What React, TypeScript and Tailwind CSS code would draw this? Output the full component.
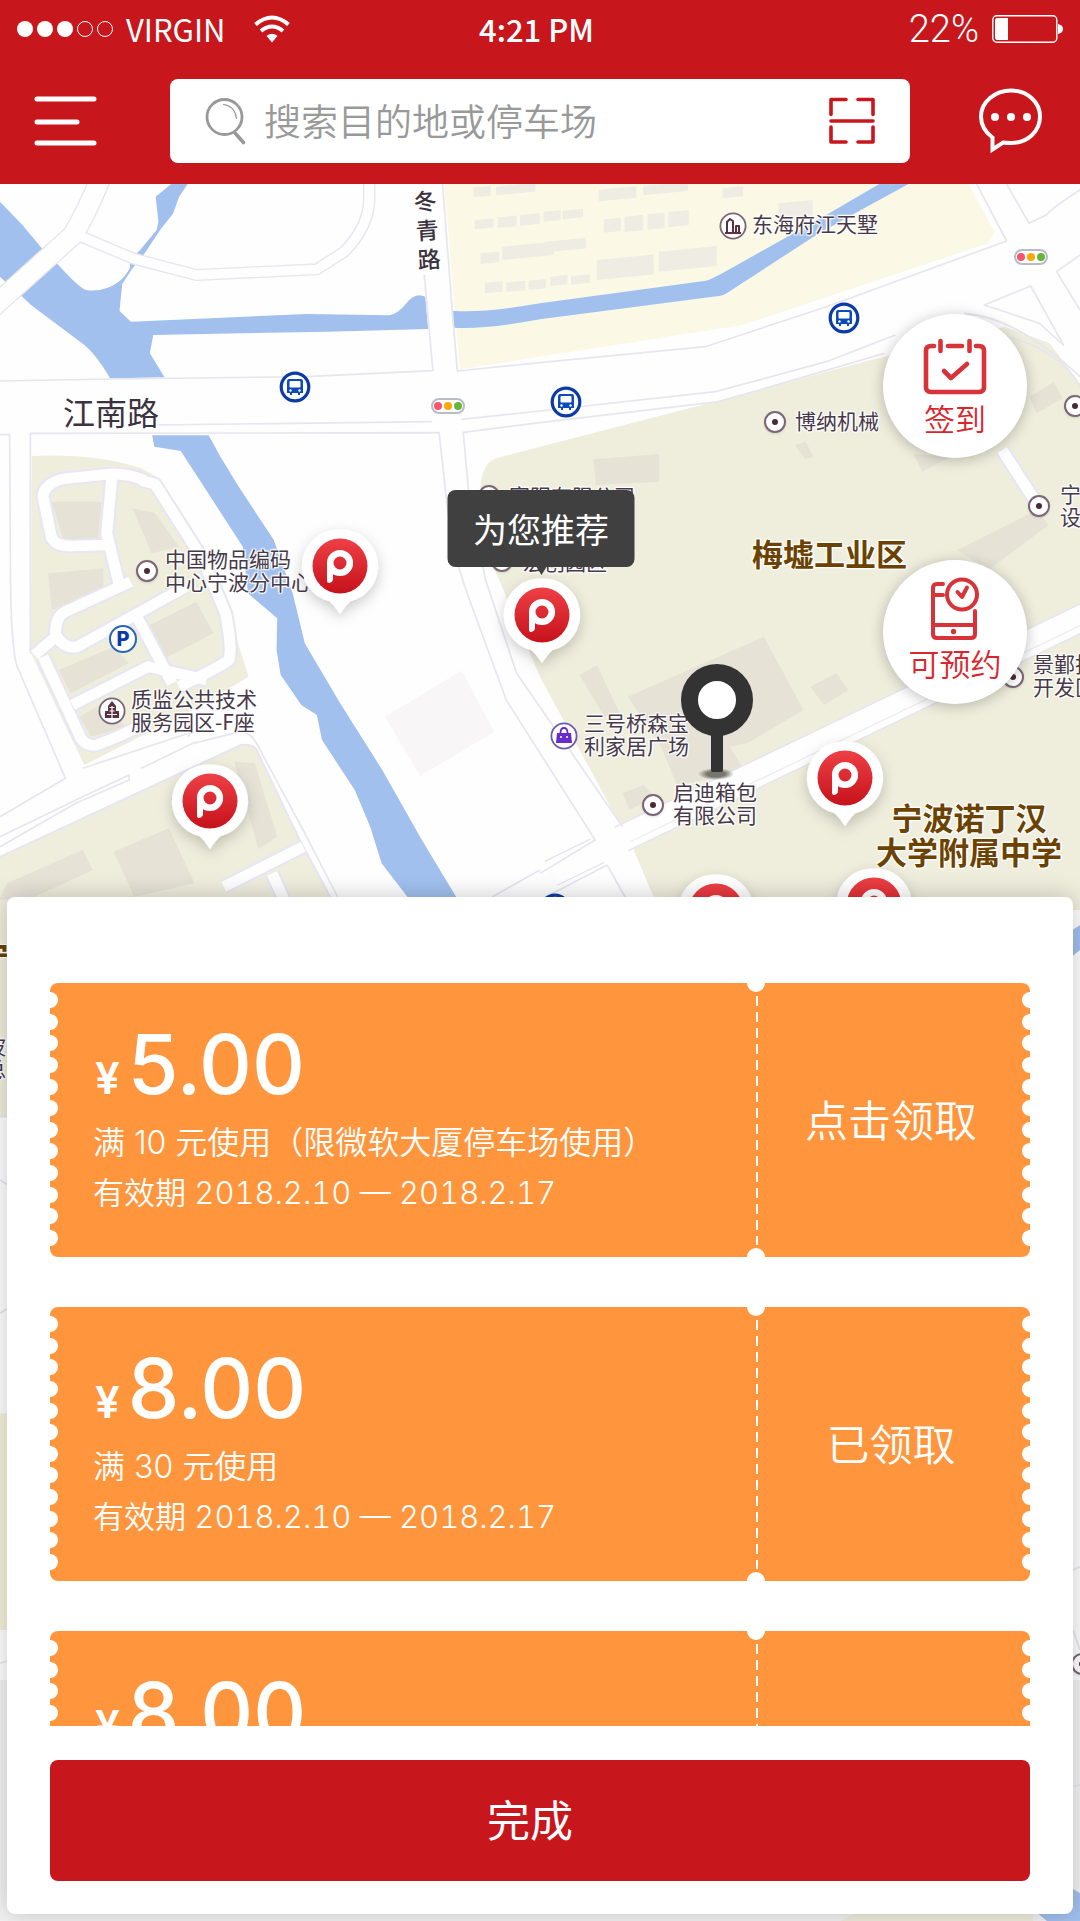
import React from 'react'

type Point = { x: number; y: number }

/* ---------- map data, in screen pixels measured from the map's top edge ---------- */

const parkingPins: Point[] = [
  { x: 340, y: 382 },
  { x: 542, y: 431 },
  { x: 210, y: 617 },
  { x: 845, y: 594 },
  { x: 716, y: 727 },
  { x: 874, y: 721 },
]

const poiDots: Point[] = [
  { x: 147, y: 387 },
  { x: 653, y: 621 },
  { x: 775, y: 238 },
  { x: 1039, y: 322 },
  { x: 1075, y: 222 },
  { x: 1013, y: 493 },
  { x: 489, y: 312 },
  { x: 502, y: 377 },
  { x: 1082, y: 1480 },
]

const busStops: Point[] = [
  { x: 295, y: 203 },
  { x: 844, y: 134 },
  { x: 566, y: 218 },
  { x: 555, y: 725 },
]

const trafficLights: Point[] = [
  { x: 448, y: 222 },
  { x: 1031, y: 73 },
]

const smallLabels: (Point & { lines: string[] })[] = [
  { x: 165, y: 363, lines: ['中国物品编码', '中心宁波分中心'] },
  { x: 131, y: 503, lines: ['质监公共技术', '服务园区-F座'] },
  { x: 752, y: 28, lines: ['东海府江天墅'] },
  { x: 795, y: 225, lines: ['博纳机械'] },
  { x: 584, y: 527, lines: ['三号桥森宝', '利家居广场'] },
  { x: 673, y: 596, lines: ['启迪箱包', '有限公司'] },
  { x: 1060, y: 298, lines: ['宁', '设'] },
  { x: 1033, y: 468, lines: ['景鄞投', '开发区'] },
  { x: 509, y: 300, lines: ['富阳有限公司'] },
  { x: 523, y: 366, lines: ['宏创园区'] },
]

const coupons = [
  { amount: '5.00', rule: '满 10 元使用（限微软大厦停车场使用）', dates: '有效期 2018.2.10 — 2018.2.17', action: '点击领取' },
  { amount: '8.00', rule: '满 30 元使用', dates: '有效期 2018.2.10 — 2018.2.17', action: '已领取' },
  { amount: '8.00', rule: '满 30 元使用', dates: '有效期 2018.2.10 — 2018.2.17', action: '已领取' },
]

const at = (p: Point) => ({ left: `${p.x / 10.8}%`, top: p.y })

/* ---------- map drawing ---------- */

const yellowBlocks = [
  [1375, 22, 50, 30], [1440, 20, 115, 26], [1378, 120, 55, 28], [1445, 112, 55, 32], [1510, 105, 58, 32],
  [1395, 220, 55, 32], [1458, 200, 150, 40], [1408, 308, 52, 32], [1470, 308, 55, 28], [1535, 302, 50, 28],
  [1738, 30, 110, 34], [1868, 18, 130, 28], [2098, 25, 60, 30], [2260, 70, 100, 50], [1578, 95, 50, 30],
  [1633, 92, 60, 26], [1753, 118, 50, 40], [1813, 110, 55, 46], [1880, 103, 50, 46], [1940, 96, 60, 46],
  [1583, 185, 118, 32], [1733, 240, 165, 60], [1913, 215, 168, 60], [1598, 290, 50, 28], [1658, 288, 55, 26],
]

const industrialBlocks = [
  'M1723 838L1914 822L1914 905L1730 915Z',
  'M2308 795L2340 785L2362 830L2338 838Z',
  'M2653 822L2760 830L2678 875Z',
  'M2990 650L3060 606L3085 655L3010 700Z',
  'M2780 1110L3010 990L3045 1035L2870 1170Z',
  'M1823 1550L2218 1370L2333 1590L2170 1690L2118 1700L2165 1775L1965 1815L1920 1700Z',
  'M1683 1485L1733 1455L1800 1600L1755 1610Z',
  'M2353 1520L2428 1480L2463 1530L2393 1575Z',
  'M1808 1840L1868 1815L1900 1850L1828 1890Z',
  'M150 965H295L285 1075L185 1080Z',
  'M385 985L450 1000L520 1100L440 1120Z',
  'M140 1180L300 1165L300 1240L150 1290Z',
  'M425 1340L570 1265L620 1360L470 1440Z',
  'M170 1470L330 1400L375 1450L205 1540Z',
  'M230 1610L290 1575L370 1640L265 1670Z',
  'M680 1745L740 1750L805 1970L750 2008Z',
  'M330 2015L490 1945L565 2110L390 2150Z',
  'M20 2110L240 2010L270 2070L100 2150L0 2160Z',
]

const innerRoads = [
  'M420 902Q370 880 320 882L180 897Q125 915 125 950L150 1075Q165 1100 210 1098L310 1095',
  'M325 890L310 1060L345 1210',
  'M410 902L450 912L590 1140L655 1300Q675 1400 665 1440Q640 1460 520 1520',
  'M380 1205L190 1295Q158 1310 162 1370L100 1425',
  'M165 1370Q190 1410 225 1400L540 1220',
  'M400 1315L500 1510',
  'M125 1430L235 1675Q250 1700 280 1695Q350 1670 420 1630',
  'M210 1575L430 1460L600 1500',
  'M650 2120L880 2000',
  'M790 2080L825 2160',
  'M2910 810L3010 970',
]

const roadEdges = [
  'M0 603L320 597L890 590L1257 572L1232 285',
  'M1285 12L1313 390L1328 573L1568 548L2048 500L2400 380L2923 183L2836 12',
  'M450 735L1255 725',
  'M1340 718L1568 693L2078 635L2400 545L2600 465',
  'M0 764L28 764L30 1130Q30 1400 50 1460L190 1795L0 1910',
  'M88 1420V760L1275 758L1300 990Q1320 1140 1360 1250L1470 1560L1728 1980L1568 2080',
  'M1568 728L2088 665L2568 520',
  'M1568 728L1345 757L1362 950L1410 1200L1500 1480L1808 1940',
  'M1763 2055L1568 2160',
  'M1763 2055L1820 2160',
  'M2923 12L2988 130L3038 105Q3060 80 3136 30',
  'M3136 225L3068 275L3136 390',
  'M2858 375L2993 318L3088 495L3018 430Z',
  'M2800 400Q2950 410 3136 590',
  'M2840 455Q3060 480 3136 620',
  'M240 1765L560 1655L545 1670',
  'M0 1970L240 1850L375 1785L375 1800L220 1870L0 2000',
  'M410 1765L560 1690L700 1655Q730 1660 745 1690L880 1950L985 2160',
  'M1430 2150L1568 2070',
  'M3116 4170L3136 4160M3116 4350L3136 4410M3116 4820L3136 4815',
  'M0 3000L30 3020M0 3400L30 3380M0 4450L30 4440',
]

function MapDrawing() {
  return (
    <svg aria-hidden="true" className="absolute inset-0 h-full w-full" viewBox="0 12 3136 5211" preserveAspectRatio="none">
      <rect width="3136" height="5223" fill="#fefefe" />
      {/* land */}
      <path fill="#fbf9e6" d="M1290 12L1335 568L1568 530L2158 435L2870 190L2888 155L2813 12Z" />
      <path fill="#efeedd" d="M1568 800L2018 680L2548 535L2918 440L3048 490L3136 610V2190L1930 2230L1840 2010L1568 1490L1435 1165L1395 920Q1400 850 1440 835Z" />
      <path fill="#efeedd" d="M92 828Q280 820 410 865L455 890L575 1080L645 1240L722 1490L560 1590L245 1755L205 1670L90 1420Z" />
      <path fill="#efeedd" stroke="#e6e6f2" strokeWidth="6" d="M-10 2035L700 1695Q735 1690 745 1710L870 1980L985 2200L300 2800L-10 2810Z" />
      <path fill="#f4f1da" d="M0 3700H30V4350H0Z" />
      <path fill="#f4f3f4" d="M0 4500H3136V5223H0Z" />
      <path fill="#efeedd" d="M2500 5190H3000V5223H2440Z" />
      <path fill="#f8f6f7" d="M1118 1610L1340 1472L1435 1655L1220 1788Z" />
      <g fill="#efede3">
        {yellowBlocks.map(([x, y, w, h]) => (
          <path key={`${x}-${y}`} d={`M${x} ${y}l${w} ${-w / 10}v${h}l${-w} ${w / 10}z`} />
        ))}
      </g>
      <g fill="#e6e2d6">
        {industrialBlocks.map((d) => (
          <path key={d} d={d} />
        ))}
      </g>
      {/* water */}
      <g fill="#a1c0ee">
        <path d="M0 65L65 135L130 215L165 250Q230 325 250 330Q300 338 345 305Q365 290 378 262L375 240L405 212L455 150L460 125L452 50L497 12H545L520 50L503 100L465 150L420 220L385 265L355 312L347 393L380 425L890 402L1130 406Q1155 402 1180 370Q1205 335 1235 350L1243 447L950 455L445 465L435 520L478 592L320 595Q280 525 245 495L90 375L65 350L25 315L0 290Z" />
        <path d="M1313 392Q1400 400 1568 370L2050 302Q2070 295 2100 278L2408 100L2553 12H2638L2500 90L2370 165L2110 340Q2095 350 2070 350L1568 418Q1400 450 1318 443Z" />
        <path d="M442 766H606L640 830L690 915L795 1080L850 1240L885 1390L985 1565L1110 1770L1225 1980L1330 2160H1190L1108 2050L1075 1940L1030 1830L935 1680L920 1605L875 1575L815 1485L803 1410L805 1315L720 1240L705 1100L525 813L448 800Z" />
        <path d="M3100 2260L3136 2235V2310L3100 2340Z" />
        <path d="M2990 5180L3116 5127L3136 5140V5223H3040Z" />
      </g>
      {/* roads */}
      <g fill="none" strokeLinejoin="round">
        <path stroke="#e6e6ee" strokeWidth="64" d="M-30 390L212 165Q250 100 290 0" />
        <path stroke="#e6e6ee" strokeWidth="36" d="M225 165L385 235L570 285L920 268L1000 215Q1070 140 1072 60V0" />
        <path stroke="#fefefe" strokeWidth="56" d="M-30 390L212 165Q250 100 290 0" />
        <path stroke="#fefefe" strokeWidth="28" d="M225 165L385 235L570 285L920 268L1000 215Q1070 140 1072 60V0" />
        <path stroke="#e4e4f0" strokeWidth="84" d="M3200 1285L1808 1975L1600 2080" />
        <path stroke="#fefefe" strokeWidth="76" d="M3200 1285L1808 1975L1600 2080" />
        <path stroke="#e9e9f2" strokeWidth="3" d="M3200 1305L1830 1985" />
        <path stroke="#fefefe" strokeWidth="78" d="M1390 1200L1480 1500L1768 1990L1880 2200" />
        <g stroke="#e6e6f4" strokeWidth="44">{innerRoads.map((d) => <path key={d} d={d} />)}</g>
        <g stroke="#fefefe" strokeWidth="32">{innerRoads.map((d) => <path key={d} d={d} />)}</g>
        <g stroke="#e6e6ef" strokeWidth="5">{roadEdges.map((d) => <path key={d} d={d} />)}</g>
      </g>
    </svg>
  )
}

function BusIcon() {
  return (
    <svg aria-hidden="true" viewBox="-16 -16 32 32" className="absolute size-8 -translate-x-1/2 -translate-y-1/2">
      <circle r="13.800" fill="#fff" stroke="#0d3ba6" strokeWidth="3.200" />
      <path d="M-6 -8H6Q8 -8 8 -5V6H5V8H3V6H-3V8H-5V6H-8V-5Q-8 -8 -6 -8Z" fill="#0d4bb8" />
      <rect x="-5.500" y="-6" width="11" height="6.500" rx="1" fill="#fff" />
      <circle cx="-4.500" cy="3.500" r="1.200" fill="#fff" />
      <circle cx="4.500" cy="3.500" r="1.200" fill="#fff" />
    </svg>
  )
}

function ParkingPin() {
  return (
    <svg aria-hidden="true" viewBox="-50 -45 100 110" className="h-[110px] w-[100px] overflow-visible">
      <defs>
        <linearGradient id="pinRed" x1="0" y1="0" x2="0" y2="1">
          <stop offset="0" stopColor="#ee4046" />
          <stop offset="1" stopColor="#c7121b" />
        </linearGradient>
        <filter id="pinShadow" x="-50%" y="-50%" width="200%" height="200%">
          <feDropShadow dx="0" dy="5" stdDeviation="7" floodColor="#000" floodOpacity="0.2" />
        </filter>
      </defs>
      <path filter="url(#pinShadow)" fill="#fff" d="M0 -36.500A36.500 36.500 0 0 1 10 35.500Q7 38 0 48Q-7 38 -10 35.500A36.500 36.500 0 0 1 0 -36.500Z" />
      <circle r="27.500" fill="url(#pinRed)" />
      <circle cy="-3" r="9.800" fill="none" stroke="#fff" strokeWidth="6.600" />
      <path fill="#fff" d="M-13 -4V15Q-13 17 -11 17Q-7 16 -7 13V4Z" />
    </svg>
  )
}

function MapLayer() {
  const halo = '[text-shadow:0_0_3px_#fff,1px_1px_1px_#fff,-1px_-1px_1px_#fff,1px_-1px_1px_#fff,-1px_1px_1px_#fff]'
  return (
    <div className="absolute inset-0 overflow-hidden">
      <MapDrawing />

      {smallLabels.map((l) => (
        <p key={l.lines[0]} style={at(l)} className={`absolute whitespace-nowrap text-[21px] leading-[23px] text-[#47394a] ${halo}`}>
          {l.lines.map((t) => (
            <span key={t} className="block">{t}</span>
          ))}
        </p>
      ))}
      <p style={at({ x: 63, y: 209 })} className={`absolute whitespace-nowrap text-[32px] leading-9 text-[#3c3340] ${halo}`}>江南路</p>
      <p style={at({ x: 415, y: 2 })} className={`absolute w-6 rotate-[-4deg] text-center text-[23px] leading-[29px] font-medium text-[#3c3340] ${halo}`}>冬青路</p>
      <p style={at({ x: 752, y: 352 })} className={`absolute whitespace-nowrap text-[31px] leading-[34px] font-bold text-[#6b4200] ${halo}`}>梅墟工业区</p>
      <p style={at({ x: 876, y: 616 })} className={`absolute text-center whitespace-nowrap text-[31px] leading-[34px] font-bold text-[#6b4200] ${halo}`}>
        宁波诺丁汉
        <br />
        大学附属中学
      </p>
      <p style={at({ x: -22, y: 753 })} className={`absolute text-[31px] leading-[34px] font-bold text-[#6b4200] ${halo}`}>宁</p>
      <p style={at({ x: -15, y: 850 })} className={`absolute w-[21px] text-[21px] leading-[23px] text-[#47394a] ${halo}`}>波总</p>

      {poiDots.map((p) => (
        <div key={`${p.x}-${p.y}`} style={at(p)} className="absolute">
          <div className="flex size-[22px] -translate-x-1/2 -translate-y-1/2 items-center justify-center rounded-full border-2 border-[#7a6675] bg-white shadow-sm">
            <div className="size-[6px] rounded-full bg-[#4a2a3a]" />
          </div>
        </div>
      ))}
      {busStops.map((p) => (
        <div key={`${p.x}-${p.y}`} style={at(p)} className="absolute">
          <BusIcon />
        </div>
      ))}
      {trafficLights.map((p) => (
        <div key={p.x} style={at(p)} className="absolute">
          <div className="flex h-4 w-[34px] -translate-x-1/2 -translate-y-1/2 items-center justify-center gap-[2px] rounded-full border-2 border-[#b9bcc8] bg-white">
            <span className="size-2 rounded-full bg-[#f4566c]" />
            <span className="size-2 rounded-full bg-[#fba70a]" />
            <span className="size-2 rounded-full bg-[#6cb33a]" />
          </div>
        </div>
      ))}

      <div style={at({ x: 123, y: 455 })} className="absolute">
        <div className="flex size-7 -translate-x-1/2 -translate-y-1/2 items-center justify-center rounded-full border-2 border-[#2a63b8] bg-white font-[Inter] text-xl font-extrabold text-[#0a3aa8]">P</div>
      </div>
      <div style={at({ x: 112, y: 527 })} className="absolute">
        <svg aria-hidden="true" viewBox="-14 -14 28 28" className="size-7 -translate-x-1/2 -translate-y-1/2">
          <circle r="12.600" fill="#fff" stroke="#7a6675" strokeWidth="1.800" />
          <path fill="#5a3040" d="M0 -10L4 -5V0H7V7H-7V0H-4V-5Z" />
          <path stroke="#fff" strokeWidth="1.200" d="M-2.500 -3.500H2.500M-2.500 0H2.500M-5 3.500H5M0 -5V7" />
        </svg>
      </div>
      <div style={at({ x: 733, y: 42 })} className="absolute">
        <svg aria-hidden="true" viewBox="-14 -14 28 28" className="size-7 -translate-x-1/2 -translate-y-1/2">
          <circle r="12.600" fill="#fff" stroke="#7a6675" strokeWidth="1.800" />
          <path fill="none" stroke="#5a3040" strokeWidth="2" strokeLinejoin="round" d="M-8 7H8M-6 6V-4L-3 -7L0 -5V6M3 6V0H6V6" />
        </svg>
      </div>
      <div style={at({ x: 564, y: 552 })} className="absolute">
        <svg aria-hidden="true" viewBox="-14 -14 28 28" className="size-7 -translate-x-1/2 -translate-y-1/2">
          <circle r="12.600" fill="#fff" stroke="#6b59b0" strokeWidth="1.800" />
          <path fill="#6a2cc8" d="M-7 -3H7L8 7H-8Z" />
          <path fill="none" stroke="#6a2cc8" strokeWidth="1.800" d="M-3.500 -3Q-3.500 -8 0 -8Q3.500 -8 3.500 -3" />
          <circle cx="-3" cy="1" r="1" fill="#fff" />
          <circle cx="3" cy="1" r="1" fill="#fff" />
        </svg>
      </div>

      {/* current position */}
      <div style={at({ x: 717, y: 516 })} className="absolute">
        <svg aria-hidden="true" viewBox="-40 -40 80 125" className="-mt-10 -ml-10 h-[125px] w-20">
          <defs>
            <radialGradient id="footShadow">
              <stop offset="0.500" stopColor="#77756d" />
              <stop offset="1" stopColor="#77756d" stopOpacity="0" />
            </radialGradient>
          </defs>
          <ellipse cx="-1" cy="74" rx="18" ry="6" fill="url(#footShadow)" />
          <rect x="-6" y="28" width="12" height="44" rx="2" fill="#333" />
          <circle r="27.500" fill="#fff" stroke="#333" strokeWidth="17" />
        </svg>
      </div>

      {parkingPins.map((p) => (
        <button key={`${p.x}-${p.y}`} type="button" aria-label="停车场" style={at(p)} className="absolute -mt-[45px] -ml-[50px]">
          <ParkingPin />
        </button>
      ))}

      <div style={at({ x: 541, y: 306 })} className="absolute">
        <div className="relative h-[77px] w-[187px] -translate-x-1/2 rounded-lg bg-[#404040] text-center text-[34px] leading-[77px] whitespace-nowrap text-white">
          为您推荐
          <span className="absolute top-full left-1/2 -ml-[5px] border-x-[5px] border-t-8 border-x-transparent border-t-[#404040]" />
        </div>
      </div>
    </div>
  )
}

/* ---------- header ---------- */

function StatusBar() {
  return (
    <div className="grid h-[57px] grid-cols-[1fr_auto_1fr] items-center px-[17px] text-white">
      <div className="flex items-center">
        <div className="flex gap-1">
          <i className="size-4 rounded-full bg-white" />
          <i className="size-4 rounded-full bg-white" />
          <i className="size-4 rounded-full bg-white" />
          <i className="size-4 rounded-full border border-white" />
          <i className="size-4 rounded-full border border-white" />
        </div>
        <span className="ml-[13px] text-[31px] leading-[44px]">VIRGIN</span>
        <svg aria-hidden="true" viewBox="0 0 36 28" className="ml-[29px] h-7 w-9" fill="none" stroke="#fff">
          <path strokeWidth="4" d="M1.500 9.500Q18 -4.500 34.500 9.500" />
          <path strokeWidth="4" d="M7 16Q18 7 29 16" />
          <path fill="#fff" stroke="none" d="M18 27.500L12.500 21Q18 16.500 23.500 21Z" />
        </svg>
      </div>
      <span className="pr-[7px] text-[31px] leading-[44px] font-medium">4:21 PM</span>
      <div className="flex items-center justify-end">
        <span className="font-[Roboto] text-[38px] leading-[44px] font-light">22%</span>
        <svg aria-hidden="true" viewBox="0 0 72 28" className="ml-3 h-7 w-[72px]">
          <rect x="1.800" y="0.800" width="64" height="26.400" rx="4" fill="none" stroke="#fff" strokeWidth="1.400" />
          <path fill="#fff" d="M6 3H17V25H6Q4 25 4 22V6Q4 3 6 3Z" />
          <path fill="#fff" d="M67 9Q72 10 72 14Q72 18 67 19Z" />
        </svg>
      </div>
    </div>
  )
}

function Header() {
  return (
    <header className="relative z-10 h-[184px] bg-[#c7161c]">
      <StatusBar />
      <div className="mt-[22px] flex h-[84px] items-center">
        <div className="w-[170px] pl-[33px]">
          <button type="button" aria-label="菜单" className="block">
            <svg aria-hidden="true" viewBox="0 0 64 50" className="h-[50px] w-16" stroke="#fff" strokeWidth="5" strokeLinecap="round">
              <path d="M4 3H61M4 26H44M4 47H61" />
            </svg>
          </button>
        </div>
        <label className="flex h-full min-w-0 flex-1 items-center rounded-lg bg-white pr-[34px] pl-[35px]">
          <span className="sr-only">搜索</span>
          <svg aria-hidden="true" viewBox="0 0 42 50" className="mr-[17px] h-[50px] w-[42px] shrink-0" fill="none" stroke="#999" strokeLinecap="round">
            <circle cx="19.500" cy="21" r="17.500" strokeWidth="2.800" />
            <path strokeWidth="3.600" d="M30 37L38.500 46.500" />
            <path strokeWidth="1.200" d="M18.500 8.500Q30 10 31.500 22.500" />
          </svg>
          <input type="text" placeholder="搜索目的地或停车场" className="mb-[2px] h-14 min-w-0 flex-1 bg-transparent text-[37px] font-[350] text-[#666] outline-none placeholder:text-[#999] placeholder:opacity-100" />
          <button type="button" aria-label="扫一扫" className="shrink-0">
            <svg aria-hidden="true" viewBox="0 0 48 48" className="size-12" fill="none" stroke="#c7161c" strokeWidth="3.600" strokeLinecap="round" strokeLinejoin="round">
              <path d="M18 2.500H3V17.500M30 2.500H45V17.500M3 30V45H18M45 30V45H30M3 24H45" />
            </svg>
          </button>
        </label>
        <div className="flex w-[170px] justify-end pr-[36px]">
          <button type="button" aria-label="消息">
            <svg aria-hidden="true" viewBox="0 0 66 66" className="size-[66px]" fill="none" stroke="#fff" strokeWidth="4">
              <path d="M14.500 49.500V61.500L25 54.500Q28 55 33 55C50 55 62 43 62 28.500C62 14 49 2.500 33 2.500C17 2.500 3 14 3 28.500C3 37 7 44 14.500 49.500Z" />
              <g fill="#fff" stroke="none">
                <circle cx="17" cy="29" r="4" />
                <circle cx="33" cy="29" r="4" />
                <circle cx="49" cy="29" r="4" />
              </g>
            </svg>
          </button>
        </div>
      </div>
    </header>
  )
}

/* ---------- floating actions ---------- */

function FloatingActions() {
  const round = 'flex size-[144px] flex-col items-center rounded-full bg-white text-[31px] leading-9 font-[350] text-[#d9262e] shadow-[0_2px_14px_rgba(0,0,0,0.25)]'
  return (
    <div className="absolute top-[130px] right-[53px] flex flex-col gap-[102px]">
      <button type="button" className={round}>
        <svg aria-hidden="true" viewBox="0 0 64 58" className="mt-6 mb-1 h-[58px] w-16" fill="none" stroke="#d9333a" strokeWidth="4.600" strokeLinecap="round" strokeLinejoin="round">
          <path d="M11 8H8Q3 8 3 13V49Q3 54 8 54H56Q61 54 61 49V13Q61 8 56 8H53M25 8H39M17.500 3V13M46.500 3V13" />
          <path d="M21 33L28 40L44 26" />
        </svg>
        签到
      </button>
      <button type="button" className={round}>
        <svg aria-hidden="true" viewBox="0 0 52 66" className="mt-4 mb-[3px] h-[66px] w-[52px]" fill="none" stroke="#d9333a" strokeWidth="4" strokeLinecap="round" strokeLinejoin="round">
          <path d="M14 8H8Q4 8 4 12V58Q4 62 8 62H42Q46 62 46 58V35M4 19H14M4 49H46" />
          <circle cx="33" cy="18.500" r="15" />
          <path d="M28.500 16L33 21L38 11.500M33 21" />
          <circle cx="24.500" cy="55.500" r="1.400" fill="#d9333a" strokeWidth="2.500" />
        </svg>
        可预约
      </button>
    </div>
  )
}

/* ---------- coupons ---------- */

function Scallops({ side }: { side: string }) {
  return (
    <div aria-hidden="true" className={`absolute top-[9px] bottom-[11px] flex flex-col justify-between ${side}`}>
      {Array.from({ length: 12 }, (_, i) => (
        <i key={i} className="size-4 rounded-full bg-white" />
      ))}
    </div>
  )
}

function Coupon({ amount, rule, dates, action }: (typeof coupons)[number]) {
  return (
    <li className="relative flex h-[274px] shrink-0 overflow-hidden rounded-lg bg-[#ff963e] text-white">
      <Scallops side="-left-2" />
      <Scallops side="-right-2" />
      <div className="min-w-0 flex-1 pt-[44px] pl-[43px] font-[Inter,'Noto_Sans_CJK_SC',sans-serif]">
        <p className="flex items-baseline gap-2 pl-[2px] leading-[76px] font-medium">
          <span className="text-[44px] font-semibold">¥</span>
          <span className="text-[82px]">{amount}</span>
        </p>
        <p className="mt-[2px] text-[32px] leading-[50px] font-[350] whitespace-nowrap">{rule}</p>
        <p className="text-[31px] leading-[50px] font-[350] whitespace-nowrap tabular-nums">{dates}</p>
      </div>
      <div className="relative flex w-[274px]">
        <i aria-hidden="true" className="absolute -top-[9px] -left-[9px] size-[18px] rounded-full bg-white" />
        <i aria-hidden="true" className="absolute -bottom-[9px] -left-[9px] size-[18px] rounded-full bg-white" />
        <i aria-hidden="true" className="absolute top-[13px] bottom-[12px] left-0 w-[2px] bg-[repeating-linear-gradient(to_bottom,white_0_10px,transparent_10px_16px)]" />
        <button type="button" className="flex-1 pr-1 pb-1 text-[43px] font-[350]">{action}</button>
      </div>
    </li>
  )
}

export default function App() {
  return (
    <div className="flex min-h-screen flex-col bg-white font-['Noto_Sans_CJK_SC',sans-serif]">
      <Header />
      <main className="relative flex-1 overflow-hidden pb-[7px]">
        <MapLayer />
        <FloatingActions />
        <section aria-label="优惠券" className="relative mx-[7px] mt-[713px] rounded-lg bg-white px-[43px] pt-[86px] pb-[33px] shadow-[0_0_24px_rgba(0,0,0,0.22)]">
          <ul className="flex max-h-[743px] flex-col gap-[50px] overflow-y-auto [scrollbar-width:none]">
            {coupons.map((c, i) => (
              <Coupon key={i} {...c} />
            ))}
          </ul>
          <button type="button" className="mt-[34px] h-[121px] w-full rounded-lg bg-[#c7161c] pr-[20px] pb-1 text-[43px] text-white">完成</button>
        </section>
      </main>
    </div>
  )
}
